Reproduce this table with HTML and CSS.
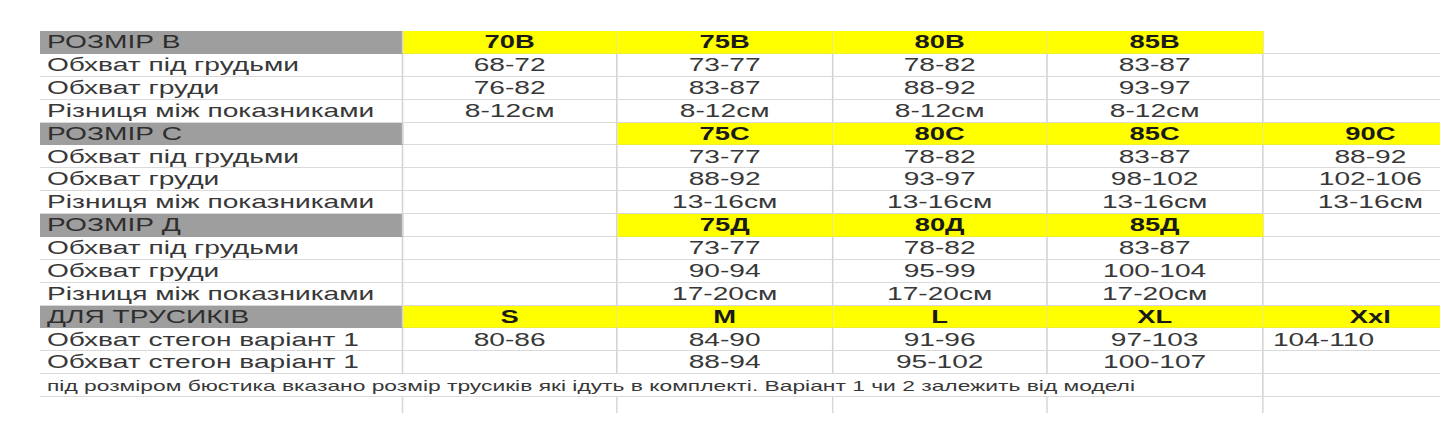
FILE: index.html
```html
<!DOCTYPE html>
<html lang="uk">
<head>
<meta charset="utf-8">
<title>Таблиця розмірів</title>
<link rel="stylesheet" href="styles.css">
</head>
<body>
<div class="sheet">
  <div class="grid">
    <div class="c lab hd">РОЗМІР В</div>
    <div class="c y">70В</div><div class="c y">75В</div><div class="c y">80В</div><div class="c y">85В</div><div class="c e"></div>

    <div class="c lab">Обхват під грудьми</div>
    <div class="c">68-72</div><div class="c">73-77</div><div class="c">78-82</div><div class="c">83-87</div><div class="c e"></div>

    <div class="c lab">Обхват груди</div>
    <div class="c">76-82</div><div class="c">83-87</div><div class="c">88-92</div><div class="c">93-97</div><div class="c e"></div>

    <div class="c lab">Різниця між показниками</div>
    <div class="c">8-12см</div><div class="c">8-12см</div><div class="c">8-12см</div><div class="c">8-12см</div><div class="c e"></div>

    <div class="c lab hd">РОЗМІР С</div>
    <div class="c"></div><div class="c y">75С</div><div class="c y">80С</div><div class="c y">85С</div><div class="c y e">90С</div>

    <div class="c lab">Обхват під грудьми</div>
    <div class="c"></div><div class="c">73-77</div><div class="c">78-82</div><div class="c">83-87</div><div class="c e">88-92</div>

    <div class="c lab">Обхват груди</div>
    <div class="c"></div><div class="c">88-92</div><div class="c">93-97</div><div class="c">98-102</div><div class="c e">102-106</div>

    <div class="c lab">Різниця між показниками</div>
    <div class="c"></div><div class="c">13-16см</div><div class="c">13-16см</div><div class="c">13-16см</div><div class="c e">13-16см</div>

    <div class="c lab hd">РОЗМІР Д</div>
    <div class="c"></div><div class="c y">75Д</div><div class="c y">80Д</div><div class="c y">85Д</div><div class="c e"></div>

    <div class="c lab">Обхват під грудьми</div>
    <div class="c"></div><div class="c">73-77</div><div class="c">78-82</div><div class="c">83-87</div><div class="c e"></div>

    <div class="c lab">Обхват груди</div>
    <div class="c"></div><div class="c">90-94</div><div class="c">95-99</div><div class="c">100-104</div><div class="c e"></div>

    <div class="c lab">Різниця між показниками</div>
    <div class="c"></div><div class="c">17-20см</div><div class="c">17-20см</div><div class="c">17-20см</div><div class="c e"></div>

    <div class="c lab hd">ДЛЯ ТРУСИКІВ</div>
    <div class="c y">S</div><div class="c y">M</div><div class="c y">L</div><div class="c y">XL</div><div class="c y e">Xxl</div>

    <div class="c lab">Обхват стегон варіант 1</div>
    <div class="c">80-86</div><div class="c">84-90</div><div class="c">91-96</div><div class="c">97-103</div><div class="c e left">104-110</div>

    <div class="c lab">Обхват стегон варіант 1</div>
    <div class="c"></div><div class="c">88-94</div><div class="c">95-102</div><div class="c">100-107</div><div class="c e"></div>

    <div class="c lab note">під розміром бюстика вказано розмір трусиків які ідуть в комплекті. Варіант 1 чи 2 залежить від моделі</div>
    <div class="c e"></div>

    <div class="g"></div><div class="g"></div><div class="g"></div><div class="g"></div><div class="g"></div><div class="g e"></div>
  </div>
</div>
</body>
</html>
```
FILE: styles.css
```css
html, body {
  margin: 0;
  padding: 0;
  overflow: hidden;
  background: #ffffff;
}
.sheet {
  box-sizing: border-box;
  padding: 31px 0 0 40px;
  width: 1440px;
  height: 432px;
  overflow: hidden;
}
.grid {
  display: grid;
  grid-template-columns: 238.8px repeat(5, 141.45px);
  grid-auto-rows: 22.875px;
  transform: scaleX(1.52);
  transform-origin: 0 0;
  font-family: "Liberation Sans", Arial, sans-serif;
  color: #383838;
}
.c {
  box-sizing: border-box;
  border-bottom: 1px solid #dadada;
  border-right: 1px solid #d2d2d2;
  display: flex;
  align-items: center;
  justify-content: center;
  font-size: 18.5px;
  line-height: 1;
  white-space: nowrap;
  padding-top: 1px;
}
.lab {
  justify-content: flex-start;
  padding-left: 4.6px;
}
.hd {
  background: #9e9e9e;
  color: #2e2e2e;
  border-bottom-color: #9e9e9e;
}
.y {
  background: #ffff00;
  color: #1a1a1a;
  font-weight: bold;
  font-size: 18px;
  border-right-color: #f0ee50;
  border-bottom-color: #efef30;
}
.e {
  border-right: none;
}
.left {
  justify-content: flex-start;
  padding-left: 6.6px;
}
.note {
  grid-column: span 5;
  font-size: 15px;
  overflow: visible;
}
.g {
  box-sizing: border-box;
  height: 16px;
  border-right: 1px solid #d8d8d8;
}
```
